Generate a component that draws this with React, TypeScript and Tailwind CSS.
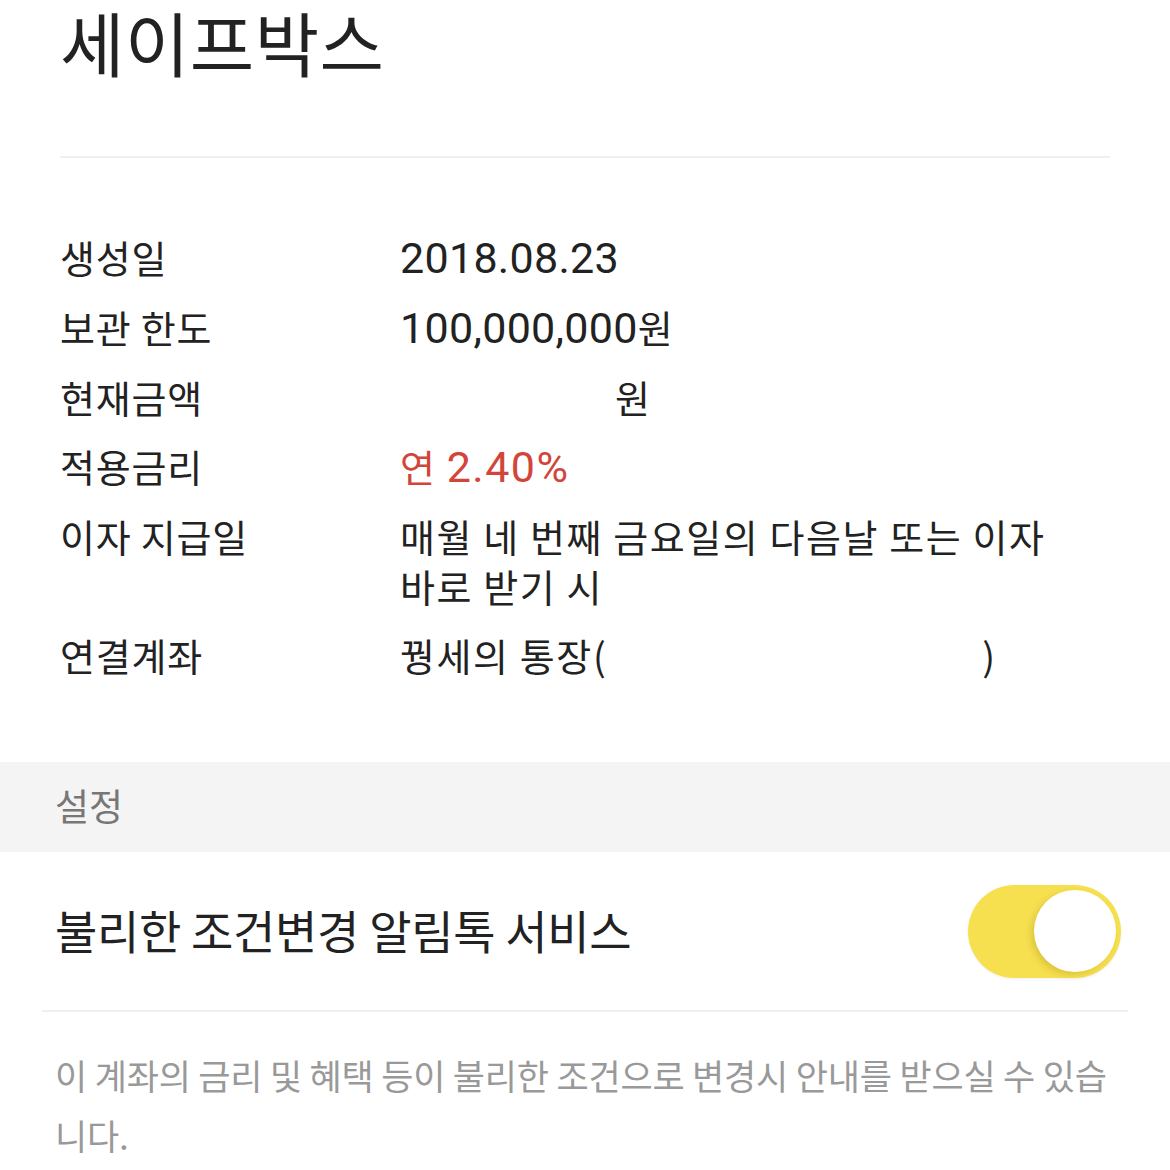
import React from 'react';

const kr = '[font-family:"Noto_Sans_CJK_KR",sans-serif]';
const num = '[font-family:Roboto,"Noto_Sans_CJK_KR",sans-serif] text-[43px] leading-[50px] tracking-[0.3px]';

interface RowProps {
  label: string;
  children: React.ReactNode;
}

function InfoRow({ label, children }: RowProps) {
  return (
    <div className="flex">
      <div className="w-[340px] shrink-0 text-[38px] leading-[69px] tracking-[0.8px] text-[#222]">{label}</div>
      <div className="flex-1 text-[38px] leading-[50px] py-[9.5px] tracking-[1.6px] text-[#222]">{children}</div>
    </div>
  );
}

export default function App() {
  return (
    <div className={`w-[1170px] h-[1170px] overflow-hidden bg-white ${kr}`}>
      {/* Title */}
      <div className="mx-[60px] h-[158px] border-b-2 border-[#efefef]">
        <h1 className="text-[70px] leading-[84px] tracking-[0.5px] text-[#222] font-normal">세이프박스</h1>
      </div>

      {/* Details */}
      <div className="px-[60px] pt-[64px] pb-[73px]">
        <InfoRow label="생성일">
          <span className={num}>2018.08.23</span>
        </InfoRow>
        <InfoRow label="보관 한도">
          <span className={num}>100,000,000</span>원
        </InfoRow>
        <InfoRow label="현재금액">
          <span className="inline-block w-[215px]" />원
        </InfoRow>
        <InfoRow label="적용금리">
          <span className="text-[#d2453b]">
            연 <span className={`${num} tracking-[1.5px]`}>2.40%</span>
          </span>
        </InfoRow>
        <InfoRow label="이자 지급일">
          <span className="block max-w-[670px] break-keep">매월 네 번째 금요일의 다음날 또는 이자 바로 받기 시</span>
        </InfoRow>
        <InfoRow label="연결계좌">
          꿩세의 통장(<span className="inline-block w-[375px]" />)
        </InfoRow>
      </div>

      {/* Settings header */}
      <div className="h-[90px] bg-[#f4f4f4] px-[55px] flex items-center">
        <span className="text-[37px] tracking-[0px] text-[#777] pb-[2px]">설정</span>
      </div>

      {/* Toggle row */}
      <div className="mx-[42px] h-[160px] border-b-2 border-[#efefef] flex items-center justify-between pl-[13px] pr-[7px]">
        <span className="text-[46px] tracking-[-0.3px] text-[#222] pb-[4px]">불리한 조건변경 알림톡 서비스</span>
        <button
          type="button"
          className="w-[153px] h-[93px] rounded-full bg-[#f6e04f] flex items-center justify-end pr-[5px] shadow-[0_1px_3px_rgba(0,0,0,0.06)]"
        >
          <span className="block w-[82px] h-[82px] rounded-full bg-white shadow-[-3px_3px_6px_rgba(150,120,0,0.25)]" />
        </button>
      </div>

      {/* Note */}
      <p className="px-[55px] pt-[33px] text-[35px] leading-[60px] tracking-[-0.2px] text-[#999]">
        <span className="whitespace-nowrap">이 계좌의 금리 및 혜택 등이 불리한 조건으로 변경시 안내를 받으실 수 있습</span>
        <br />
        니다.
      </p>
    </div>
  );
}
